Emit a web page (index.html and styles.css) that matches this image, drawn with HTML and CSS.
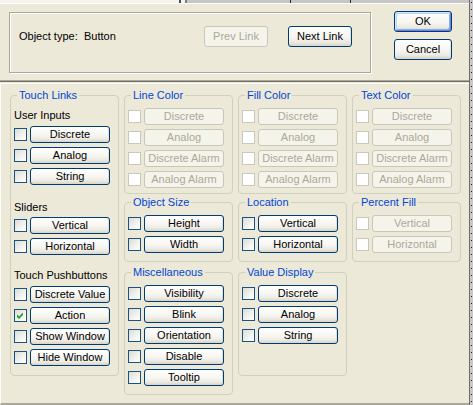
FILE: index.html
```html
<!DOCTYPE html>
<html>
<head>
<meta charset="utf-8">
<title>Touch Links</title>
<link rel="stylesheet" href="styles.css">
</head>
<body>
<div class="screen">
  <div class="main">
    <div class="ruler">
      <span class="seg-a"></span><span class="tick"></span><span class="seg-b"></span><span class="tick2"></span><span class="seg-c"></span>
    </div>
    <div class="top">
      <div class="objbox">
        <span class="lbl">Object type:</span><span class="val">Button</span>
        <div class="navs">
          <button class="btn nav" disabled>Prev Link</button>
          <button class="btn nav">Next Link</button>
        </div>
      </div>
      <div class="dlg">
        <button class="btn dlgbtn def">OK</button>
        <button class="btn dlgbtn">Cancel</button>
      </div>
    </div>
    <div class="sep"></div>
    <div class="bottom">
      <div class="col">
        <fieldset class="grp g-touch">
          <legend>Touch Links</legend>
          <div class="sec first">User Inputs</div>
          <div class="row r4"><span class="chk"></span><button class="btn">Discrete</button></div>
          <div class="row r4"><span class="chk"></span><button class="btn">Analog</button></div>
          <div class="row r4"><span class="chk"></span><button class="btn">String</button></div>
          <div class="sec s2">Sliders</div>
          <div class="row r3"><span class="chk"></span><button class="btn">Vertical</button></div>
          <div class="row r4"><span class="chk"></span><button class="btn">Horizontal</button></div>
          <div class="sec s3">Touch Pushbuttons</div>
          <div class="row r4"><span class="chk"></span><button class="btn">Discrete Value</button></div>
          <div class="row r4"><span class="chk on"><svg viewBox="0 0 11 11" width="11" height="11"><polygon points="2,4.5 4,6.5 8,2.5 8,5 4,9 2,7" fill="#21A121"/></svg></span><button class="btn">Action</button></div>
          <div class="row r4"><span class="chk"></span><button class="btn">Show Window</button></div>
          <div class="row r4"><span class="chk"></span><button class="btn">Hide Window</button></div>
        </fieldset>
      </div>
      <div class="col">
        <fieldset class="grp g-four">
          <legend>Line Color</legend>
          <div class="row"><span class="chk off"></span><button class="btn" disabled>Discrete</button></div>
          <div class="row r4"><span class="chk off"></span><button class="btn" disabled>Analog</button></div>
          <div class="row r4"><span class="chk off"></span><button class="btn" disabled>Discrete Alarm</button></div>
          <div class="row r4"><span class="chk off"></span><button class="btn" disabled>Analog Alarm</button></div>
        </fieldset>
        <fieldset class="grp g-two">
          <legend>Object Size</legend>
          <div class="row"><span class="chk"></span><button class="btn">Height</button></div>
          <div class="row r4"><span class="chk"></span><button class="btn">Width</button></div>
        </fieldset>
        <fieldset class="grp g-misc">
          <legend>Miscellaneous</legend>
          <div class="row"><span class="chk"></span><button class="btn">Visibility</button></div>
          <div class="row r4"><span class="chk"></span><button class="btn">Blink</button></div>
          <div class="row r4"><span class="chk"></span><button class="btn">Orientation</button></div>
          <div class="row r4"><span class="chk"></span><button class="btn">Disable</button></div>
          <div class="row r4"><span class="chk"></span><button class="btn">Tooltip</button></div>
        </fieldset>
      </div>
      <div class="col">
        <fieldset class="grp g-four">
          <legend>Fill Color</legend>
          <div class="row"><span class="chk off"></span><button class="btn" disabled>Discrete</button></div>
          <div class="row r4"><span class="chk off"></span><button class="btn" disabled>Analog</button></div>
          <div class="row r4"><span class="chk off"></span><button class="btn" disabled>Discrete Alarm</button></div>
          <div class="row r4"><span class="chk off"></span><button class="btn" disabled>Analog Alarm</button></div>
        </fieldset>
        <fieldset class="grp g-two">
          <legend>Location</legend>
          <div class="row"><span class="chk"></span><button class="btn">Vertical</button></div>
          <div class="row r4"><span class="chk"></span><button class="btn">Horizontal</button></div>
        </fieldset>
        <fieldset class="grp g-value">
          <legend>Value Display</legend>
          <div class="row"><span class="chk"></span><button class="btn">Discrete</button></div>
          <div class="row r4"><span class="chk"></span><button class="btn">Analog</button></div>
          <div class="row r4"><span class="chk"></span><button class="btn">String</button></div>
        </fieldset>
      </div>
      <div class="col">
        <fieldset class="grp g-four">
          <legend>Text Color</legend>
          <div class="row"><span class="chk off"></span><button class="btn" disabled>Discrete</button></div>
          <div class="row r4"><span class="chk off"></span><button class="btn" disabled>Analog</button></div>
          <div class="row r4"><span class="chk off"></span><button class="btn" disabled>Discrete Alarm</button></div>
          <div class="row r4"><span class="chk off"></span><button class="btn" disabled>Analog Alarm</button></div>
        </fieldset>
        <fieldset class="grp g-two">
          <legend>Percent Fill</legend>
          <div class="row"><span class="chk off"></span><button class="btn" disabled>Vertical</button></div>
          <div class="row r4"><span class="chk off"></span><button class="btn" disabled>Horizontal</button></div>
        </fieldset>
      </div>
    </div>
  </div>
  <div class="edge"></div>
</div>
</body>
</html>
```
FILE: styles.css
```css
html, body {
  margin: 0;
  padding: 0;
  background: #ECE9D8;
}
body {
  font-family: "Liberation Sans", Arial, sans-serif;
  font-size: 11px;
  color: #000;
}
.screen {
  display: flex;
  width: 473px;
  height: 405px;
  overflow: hidden;
}
.main {
  width: 469px;
  height: 405px;
  display: flex;
  flex-direction: column;
  background: #ECE9D8;
}
.edge {
  width: 3px;
  height: 405px;
  border-left: 1px solid #6F6E66;
  background: repeating-linear-gradient(to bottom, #1E1E1E 0, #1E1E1E 1px, transparent 1px, transparent 7px) 1px 2px / 1px 100% no-repeat, #C8C8C8;
}

/* ruler strip at very top */
.ruler {
  display: flex;
  height: 3px;
  flex: none;
}
.seg-a { width: 179px; background: #F4F3EE; }
.tick { width: 2px; background: #4A4A4A; }
.seg-b { width: 4px; background: #F4F3EE; }
.tick2 { width: 2px; background: #7E7E7E; }
.seg-c {
  flex: 1;
  background:
    linear-gradient(#2A2A2A, #2A2A2A) 103px 0 / 1px 100% no-repeat,
    linear-gradient(#2A2A2A, #2A2A2A) 163px 0 / 1px 100% no-repeat,
    #C6C6C6;
}

/* top panel */
.top {
  flex: none;
  height: 77px;
  box-sizing: border-box;
  border-top: 1px solid #FFFFFF;
  display: flex;
  align-items: flex-start;
}
.objbox {
  margin: 8px 0 0 9px;
  width: 362px;
  height: 61px;
  box-sizing: border-box;
  border: 1px solid #ACA899;
  box-shadow: inset 1px 1px 0 #FFFFFF, 1px 1px 0 #FFFFFF;
  display: flex;
  align-items: flex-start;
  padding: 13px 18px 0 9px;
}
.lbl {
  width: 65px;
  line-height: 21px;
}
.val {
  line-height: 21px;
}
.navs {
  margin-left: auto;
  display: flex;
  gap: 20px;
}
.dlg {
  margin: 7px 0 0 23px;
  display: flex;
  flex-direction: column;
  gap: 7px;
}

.sep {
  flex: none;
  height: 2px;
  box-sizing: border-box;
  border-top: 1px solid #ACA899;
  border-bottom: 1px solid #716F64;
}

/* bottom panel */
.bottom {
  flex: 1;
  margin-top: 1px;
  border-top: 1px solid #FFFFFF;
  border-left: 1px solid #FFFFFF;
  border-bottom: 2px solid #ACA899;
  padding: 5px 0 0 9px;
  display: flex;
  align-items: flex-start;
  gap: 5px;
}
.col {
  width: 109px;
  display: flex;
  flex-direction: column;
}
.grp {
  margin: 0;
  width: 109px;
  min-width: 0;
  box-sizing: border-box;
  border: 1px solid #D0D0BF;
  border-radius: 4px;
  padding: 6px 7px 5px 3px;
}
.grp legend {
  padding: 0 2px;
  margin-left: 3px;
  font-size: 11px;
  line-height: 13px;
  color: #0046D5;
}
.g-touch { padding-bottom: 9px; }
.g-four { padding-bottom: 5px; }
.g-two { margin-top: 2px; padding-bottom: 8px; }
.g-misc { margin-top: 4px; padding-bottom: 8px; }
.g-value { margin-top: 4px; padding-bottom: 31px; }

.sec {
  line-height: 14px;
  white-space: nowrap;
}
.s2 { margin-top: 15px; }
.s3 { margin-top: 13px; }

.row {
  display: flex;
  align-items: center;
  height: 17px;
}
.r4 { margin-top: 4px; }
.r3 { margin-top: 3px; }

.chk {
  width: 13px;
  height: 13px;
  box-sizing: border-box;
  border: 1px solid #1C5180;
  background: linear-gradient(135deg, #DCDCD7 0%, #F3F3EF 60%, #FFFFFF 100%);
  margin-right: 3px;
  flex: none;
  display: flex;
}
.chk svg { display: block; }
.chk.off {
  border-color: #CAC8BB;
  background: #FFFFFF;
}

.btn {
  appearance: none;
  -webkit-appearance: none;
  margin: 0;
  padding: 0;
  width: 80px;
  height: 17px;
  box-sizing: border-box;
  font-family: "Liberation Sans", Arial, sans-serif;
  font-size: 11px;
  line-height: 15px;
  color: #000;
  text-align: center;
  white-space: nowrap;
  overflow: hidden;
  border: 1px solid #003C74;
  border-radius: 3px;
  background: linear-gradient(to bottom, #FFFFFF 0%, #F6F5F0 55%, #ECEAE2 80%, #D8D3C7 100%);
  box-shadow: inset -1px 0 0 #E3E0D6;
}
.btn:disabled {
  color: #ACA899;
  border-color: #C9C7BA;
  background: #F5F4EA;
  box-shadow: none;
}
.nav {
  width: 64px;
  height: 21px;
  line-height: 19px;
}
.dlgbtn {
  width: 58px;
  height: 21px;
  line-height: 19px;
}
.def {
  box-shadow:
    inset 1px 1px 0 #CEE7FF,
    inset -1px -1px 0 #6982EE,
    inset 2px 2px 0 #BCD4F6,
    inset -2px -2px 0 #89ADE4;
}
```
